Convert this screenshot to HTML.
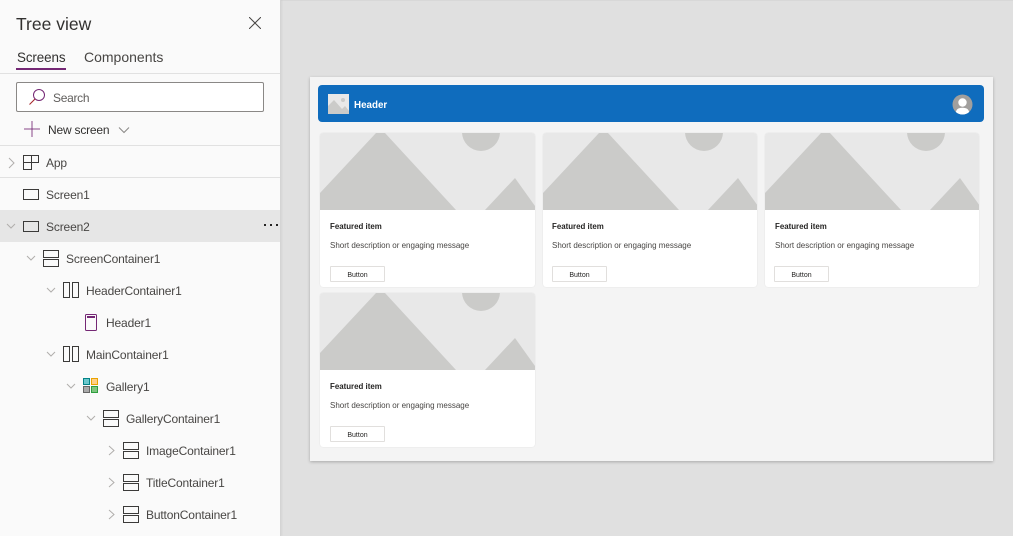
<!DOCTYPE html>
<html><head><meta charset="utf-8"><style>
html,body{margin:0;padding:0}
body{width:1013px;height:536px;overflow:hidden;position:relative;background:#e0e0e0;font-family:"Liberation Sans",sans-serif;color:#3b3a39}
.a{position:absolute}
.t{position:absolute;white-space:nowrap;line-height:16px}
#side{left:0;top:0;width:280px;height:536px;background:#fafafa;border-right:1px solid #d4d4d4;box-shadow:1px 0 2px rgba(0,0,0,.06)}
.l{position:absolute;left:0;width:280px;height:1px;background:#e1e1e1}
.tree{font-size:12px;letter-spacing:-.15px;color:#484644}
.card{position:absolute;width:215px;height:154px;background:#fff;border-radius:3px;overflow:hidden;box-shadow:0 0 1px rgba(0,0,0,.15)}
.card svg{position:absolute;left:0;top:0}
.card .h{position:absolute;left:10px;top:86px;font-size:7.9px;font-weight:bold;color:#252423;line-height:16px;white-space:nowrap}
.card .d{position:absolute;left:10px;top:105px;font-size:8px;color:#484644;line-height:16px;white-space:nowrap}
.card .b{position:absolute;left:10px;top:133px;width:53px;height:14px;border:1px solid #e1dfdd;border-radius:1px;font-size:7px;color:#252423;text-align:center;line-height:18px}
</style></head><body>
<div class="a" style="left:0;top:0;width:1013px;height:1px;background:#d8d8d8"></div>
<div id="side" class="a"></div>
<div class="t" style="left:16px;top:13px;font-size:17.5px;line-height:22px;color:#323130">Tree view</div>
<svg class="a" style="left:249px;top:17px" width="12" height="12"><path d="M0 0L12 12M12 0L0 12" stroke="#484644" stroke-width="1" fill="none"/></svg>
<div class="t" style="left:17px;top:50px;font-size:13.4px;letter-spacing:-.1px;color:#323130">Screens</div>
<div class="t" style="left:84px;top:49px;font-size:14px;color:#484644">Components</div>
<div class="a" style="left:16px;top:68px;width:50px;height:2px;background:#742774"></div>
<div class="l" style="top:73px"></div>
<div class="a" style="left:16px;top:82px;width:246px;height:28px;background:#fff;border:1px solid #8a8886;border-radius:2px"></div>
<svg class="a" style="left:28px;top:88px" width="20" height="18"><circle cx="11" cy="7" r="5.500" stroke="#742774" stroke-width="1" fill="none"/><path d="M7 11L1.500 16.500" stroke="#a4262c" stroke-width="1.100"/></svg>
<div class="t" style="left:53px;top:90px;font-size:12px;letter-spacing:-.3px;color:#605e5c">Search</div>
<svg class="a" style="left:24px;top:121px" width="16" height="16"><path d="M0 8H16" stroke="#742774" stroke-width="1.200" opacity=".7"/><path d="M8 0V16" stroke="#742774" stroke-width="1.200" opacity=".7"/></svg>
<div class="t" style="left:48px;top:122px;font-size:12px;letter-spacing:-.2px;color:#323130">New screen</div>
<svg class="a" style="left:118px;top:126px" width="12" height="8"><path d="M1 1.500L6 6.500L11 1.500" stroke="#8a8886" fill="none"/></svg>
<div class="l" style="top:145px"></div>
<div class="l" style="top:177px"></div>
<div class="a" style="left:0;top:210px;width:280px;height:32px;background:#e6e6e6"></div>

<svg class="a" style="left:0;top:0" width="280" height="536" fill="none">
<g stroke="#b0aeac" stroke-width="1">
<path d="M9 158L14 163L9 168"/>
<path d="M7 224L11 228L15 224"/>
<path d="M27 256L31 260L35 256"/>
<path d="M47 288L51 292L55 288"/>
<path d="M47 352L51 356L55 352"/>
<path d="M67 384L71 388L75 384"/>
<path d="M87 416L91 420L95 416"/>
<path d="M109 446L114 450.500L109 455"/>
<path d="M109 478L114 482.500L109 487"/>
<path d="M109 510L114 514.500L109 519"/>
</g>
<g stroke="#3b3a39" stroke-width="1">
<path d="M23.500 155.500H38.500V162.500H31.500V169.500H23.500ZM23.500 162.500H31.500M31.500 155.500V162.500"/>
<rect x="23.500" y="189.500" width="15" height="10"/>
<rect x="23.500" y="221.500" width="15" height="10"/>
<rect x="43.500" y="250.500" width="15" height="7"/><rect x="43.500" y="259.500" width="15" height="7"/>
<rect x="63.500" y="282.500" width="6" height="15"/><rect x="72.500" y="282.500" width="6" height="15"/>
<rect x="63.500" y="346.500" width="6" height="15"/><rect x="72.500" y="346.500" width="6" height="15"/>
<rect x="103.500" y="410.500" width="15" height="7"/><rect x="103.500" y="419.500" width="15" height="7"/>
<rect x="123.500" y="442.500" width="15" height="7"/><rect x="123.500" y="451.500" width="15" height="7"/>
<rect x="123.500" y="474.500" width="15" height="7"/><rect x="123.500" y="483.500" width="15" height="7"/>
<rect x="123.500" y="506.500" width="15" height="7"/><rect x="123.500" y="515.500" width="15" height="7"/>
</g>
<rect x="85.500" y="314.500" width="11" height="16" rx="1" stroke="#742774"/>
<rect x="87" y="316" width="8" height="2" fill="#742774"/>
<rect x="83.500" y="378.500" width="6" height="6" fill="#6cc7cc" stroke="#038387"/>
<rect x="91.500" y="378.500" width="6" height="6" fill="#fdcf87" stroke="#eaa300"/>
<rect x="83.500" y="386.500" width="6" height="6" fill="#aaa" stroke="#666"/>
<rect x="91.500" y="386.500" width="6" height="6" fill="#7fc47f" stroke="#2e9e3e"/>
<g fill="#252423"><rect x="264" y="224" width="2" height="2"/><rect x="270" y="224" width="2" height="2"/><rect x="276" y="224" width="2" height="2"/></g>
</svg>

<div class="t tree" style="left:46px;top:155px">App</div>
<div class="t tree" style="left:46px;top:187px">Screen1</div>
<div class="t tree" style="left:46px;top:219px">Screen2</div>
<div class="t tree" style="left:66px;top:251px">ScreenContainer1</div>
<div class="t tree" style="left:86px;top:283px">HeaderContainer1</div>
<div class="t tree" style="left:106px;top:315px">Header1</div>
<div class="t tree" style="left:86px;top:347px">MainContainer1</div>
<div class="t tree" style="left:106px;top:379px">Gallery1</div>
<div class="t tree" style="left:126px;top:411px">GalleryContainer1</div>
<div class="t tree" style="left:146px;top:443px">ImageContainer1</div>
<div class="t tree" style="left:146px;top:475px">TitleContainer1</div>
<div class="t tree" style="left:146px;top:507px">ButtonContainer1</div>

<div class="a" style="left:310px;top:77px;width:683px;height:384px;background:#f4f4f4;box-shadow:0 1px 3px rgba(0,0,0,.25)"></div>
<div class="a" style="left:318px;top:85px;width:666px;height:37px;background:#0f6cbd;border-radius:4px"></div>
<svg class="a" style="left:328px;top:94px" width="21" height="20"><rect width="21" height="20" fill="#e8e8e8"/><path d="M0 12L6 6L14 15L17 12L21 17V20H0Z" fill="#cbcbc9"/><circle cx="15" cy="6" r="2" fill="#cbcbc9"/></svg>
<div class="t" style="left:354px;top:98px;font-size:9.800px;font-weight:bold;color:#fff">Header</div>
<svg class="a" style="left:952px;top:94px" width="21" height="21"><defs><clipPath id="cp"><circle cx="10.500" cy="10.500" r="10"/></clipPath></defs><circle cx="10.500" cy="10.500" r="10" fill="#a19f9d"/><g clip-path="url(#cp)" fill="#fff"><circle cx="10.500" cy="8.500" r="4.200"/><path d="M3.500 21C3.500 15.500 6 13.800 10.500 13.800S17.500 15.500 17.500 21Z"/></g></svg>

<div class="card" style="left:320px;top:133px"><svg width="215" height="78"><rect width="215" height="77" fill="#e8e8e8"/><path d="M0 60L56 0H65L136 77H0Z" fill="#cbcbc9"/><path d="M165 77L195 45L215 73V77Z" fill="#cbcbc9"/><circle cx="161" cy="-1" r="19" fill="#cbcbc9"/></svg><div class="h">Featured item</div><div class="d">Short description or engaging message</div><div class="b">Button</div></div>
<div class="card" style="left:543px;top:133px;width:214px"><svg width="215" height="78"><rect width="215" height="77" fill="#e8e8e8"/><path d="M0 60L56 0H65L136 77H0Z" fill="#cbcbc9"/><path d="M165 77L195 45L215 73V77Z" fill="#cbcbc9"/><circle cx="161" cy="-1" r="19" fill="#cbcbc9"/></svg><div class="h" style="left:9px">Featured item</div><div class="d" style="left:9px">Short description or engaging message</div><div class="b" style="left:9px">Button</div></div>
<div class="card" style="left:765px;top:133px;width:214px"><svg width="215" height="78"><rect width="215" height="77" fill="#e8e8e8"/><path d="M0 60L56 0H65L136 77H0Z" fill="#cbcbc9"/><path d="M165 77L195 45L215 73V77Z" fill="#cbcbc9"/><circle cx="161" cy="-1" r="19" fill="#cbcbc9"/></svg><div class="h">Featured item</div><div class="d">Short description or engaging message</div><div class="b" style="left:9px">Button</div></div>
<div class="card" style="left:320px;top:293px"><svg width="215" height="78"><rect width="215" height="77" fill="#e8e8e8"/><path d="M0 60L56 0H65L136 77H0Z" fill="#cbcbc9"/><path d="M165 77L195 45L215 73V77Z" fill="#cbcbc9"/><circle cx="161" cy="-1" r="19" fill="#cbcbc9"/></svg><div class="h">Featured item</div><div class="d">Short description or engaging message</div><div class="b">Button</div></div>
</body></html>
